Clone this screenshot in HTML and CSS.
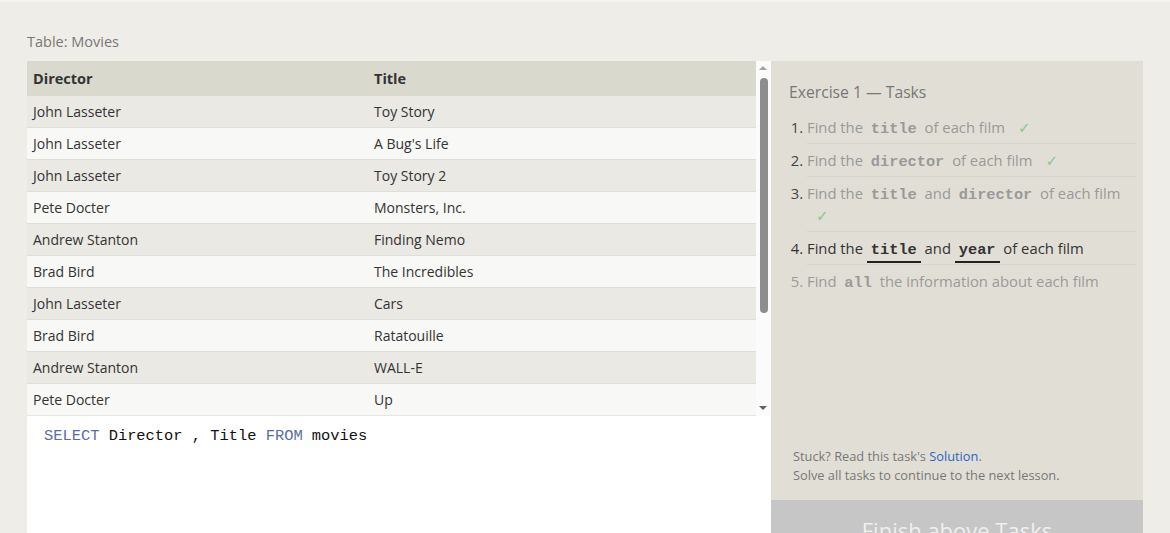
FILE: index.html
```html
<!DOCTYPE html>
<html lang="en">
<head>
<meta charset="utf-8">
<title>Movies</title>
<link rel="stylesheet" href="styles.css">
</head>
<body>
<div class="page">
  <div class="table-label">Table: Movies</div>
  <div class="main">
    <div class="left">
      <div class="table-wrap">
        <div class="grid">
          <div class="row head"><div class="c1">Director</div><div class="c2">Title</div></div>
          <div class="row odd"><div class="c1">John Lasseter</div><div class="c2">Toy Story</div></div>
          <div class="row even"><div class="c1">John Lasseter</div><div class="c2">A Bug's Life</div></div>
          <div class="row odd"><div class="c1">John Lasseter</div><div class="c2">Toy Story 2</div></div>
          <div class="row even"><div class="c1">Pete Docter</div><div class="c2">Monsters, Inc.</div></div>
          <div class="row odd"><div class="c1">Andrew Stanton</div><div class="c2">Finding Nemo</div></div>
          <div class="row even"><div class="c1">Brad Bird</div><div class="c2">The Incredibles</div></div>
          <div class="row odd"><div class="c1">John Lasseter</div><div class="c2">Cars</div></div>
          <div class="row even"><div class="c1">Brad Bird</div><div class="c2">Ratatouille</div></div>
          <div class="row odd"><div class="c1">Andrew Stanton</div><div class="c2">WALL-E</div></div>
          <div class="row even last"><div class="c1">Pete Docter</div><div class="c2">Up</div></div>
        </div>
        <div class="scrollbar">
          <div class="arrow up"></div>
          <div class="thumb"></div>
          <div class="arrow down"></div>
        </div>
      </div>
      <div class="editor"><span class="kw">SELECT</span> Director , Title <span class="kw">FROM</span> movies</div>
    </div>
    <div class="tasks">
      <div class="tasks-body">
        <h2 class="tasks-title">Exercise 1 — Tasks</h2>
        <ol class="task-list">
          <li class="done">Find the <code>title</code> of each film <span class="check">✓</span></li>
          <li class="done">Find the <code>director</code> of each film <span class="check">✓</span></li>
          <li class="done">Find the <code>title</code> and <code>director</code> of each film <span class="check">✓</span></li>
          <li class="current">Find the <code>title</code> and <code>year</code> of each film</li>
          <li class="todo">Find <code>all</code> the information about each film</li>
        </ol>
      </div>
      <div class="stuck">
        Stuck? Read this task's <a class="solution" href="#">Solution</a>.<br>
        Solve all tasks to continue to the next lesson.
      </div>
      <div class="finish">Finish above Tasks</div>
    </div>
  </div>
</div>
</body>
</html>
```

FILE: styles.css
```css
html, body {
  margin: 0;
  padding: 0;
  height: 533px;
  overflow: hidden;
  background: #efede7;
}

body {
  font-family: "Open Sans", "Noto Sans", sans-serif;
  color: #333;
}

.page {
  border-top: 2px solid #f4f2ee;
  padding: 30px 27px 0 27px;
}

.table-label {
  font-size: 14.5px;
  line-height: 20px;
  color: #777;
  margin-bottom: 9px;
}

.main {
  display: flex;
  height: 509px;
}

.left {
  width: 744px;
  display: flex;
  flex-direction: column;
}

.table-wrap {
  display: flex;
  height: 355px;
}

.grid {
  width: 729px;
  font-size: 14px;
}

.row {
  display: flex;
  height: 31px;
  line-height: 31px;
  border-bottom: 1px solid #dfdfda;
}

.row.head {
  height: 35px;
  line-height: 35px;
  background: #dad9ce;
  font-weight: bold;
  font-size: 14.5px;
  border-bottom: none;
}

.row.odd { background: #eae9e3; }
.row.even { background: #f8f8f6; }
.row.last { border-bottom-color: #e6e6e2; }

.c1 {
  width: 341px;
  padding-left: 6px;
  box-sizing: border-box;
}

.c2 {
  flex: 1;
  padding-left: 6px;
}

.scrollbar {
  width: 15px;
  background: #fbfbfb;
  position: relative;
}

.arrow {
  width: 0;
  height: 0;
  position: absolute;
  left: 3px;
  border-left: 4px solid transparent;
  border-right: 4px solid transparent;
}

.arrow.up {
  top: 5px;
  border-bottom: 4px solid #a3a3a3;
}

.arrow.down {
  bottom: 6px;
  border-top: 4px solid #606060;
}

.thumb {
  position: absolute;
  left: 4px;
  top: 17px;
  width: 8px;
  height: 235px;
  border-radius: 4px;
  background: #8d8d8d;
}

.editor {
  flex: 1;
  background: #fff;
  padding: 10px 17px;
  font-family: "Liberation Mono", "DejaVu Sans Mono", monospace;
  font-size: 15.4px;
  line-height: 20px;
  color: #111;
  white-space: pre;
}

.kw { color: #5a6ca3; }

.tasks {
  width: 372px;
  background: #e1dfd5;
  display: flex;
  flex-direction: column;
}

.tasks-body {
  padding: 20px 7px 0 18px;
}

.tasks-title {
  margin: 0 0 8px 0;
  font-size: 15.7px;
  line-height: 22px;
  font-weight: normal;
  color: #777;
}

.task-list {
  margin: 0;
  padding-left: 18px;
  font-size: 14.8px;
  line-height: 22px;
}

.task-list li {
  padding: 5px 0;
  border-bottom: 1px solid #d6d4ca;
}

.task-list li:last-child { border-bottom: none; }

.task-list li.done { color: #999; }
.task-list li.done::marker { color: #444; }
.task-list li.current { color: #333; }
.task-list li.todo { color: #9a9a9a; }

.task-list code {
  font-family: "Liberation Mono", "DejaVu Sans Mono", monospace;
  font-weight: bold;
  font-size: 15.3px;
  line-height: 16px;
  padding: 0 4px 2px;
}

.task-list li.current code {
  border-bottom: 2px solid #222;
}

.check {
  color: #8cc48c;
  font-family: "DejaVu Sans", sans-serif;
  font-size: 15px;
  line-height: 16px;
  margin-left: 9px;
}

.stuck {
  margin-top: auto;
  padding: 0 10px 15px 22px;
  font-size: 12.8px;
  line-height: 19px;
  color: #777;
}

.solution {
  color: #2d62c7;
  text-decoration: none;
}

.finish {
  height: 70px;
  background: #c6c6c6;
  color: #efefef;
  font-size: 22px;
  line-height: 30px;
  padding-top: 15px;
  box-sizing: border-box;
  text-align: center;
}
```
